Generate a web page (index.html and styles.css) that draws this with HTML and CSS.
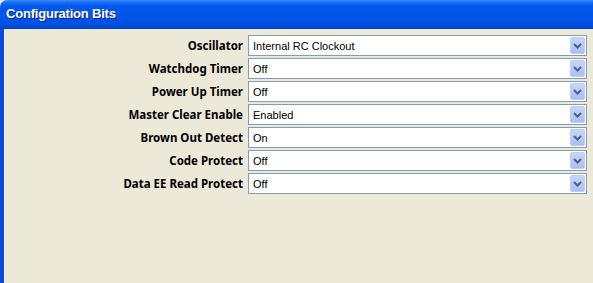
FILE: index.html
```html
<!DOCTYPE html>
<html lang="en">
<head>
    <meta charset="UTF-8">
    <title>Configuration Bits</title>
    <link rel="stylesheet" href="styles.css">
</head>
<body>

<div class="window">
    <div class="titlebar">Configuration Bits</div>
    <div class="content">
        <div class="form">
            <div class="label">Oscillator</div>
            <div class="combo"><span class="value">Internal RC Clockout</span><span class="btn"><svg width="9" height="6" viewBox="0 0 9 6"><path d="M1 1 L4.5 4.5 L8 1" fill="none" stroke="#4d6185" stroke-width="2"/></svg></span></div>

            <div class="label">Watchdog Timer</div>
            <div class="combo"><span class="value">Off</span><span class="btn"><svg width="9" height="6" viewBox="0 0 9 6"><path d="M1 1 L4.5 4.5 L8 1" fill="none" stroke="#4d6185" stroke-width="2"/></svg></span></div>

            <div class="label">Power Up Timer</div>
            <div class="combo"><span class="value">Off</span><span class="btn"><svg width="9" height="6" viewBox="0 0 9 6"><path d="M1 1 L4.5 4.5 L8 1" fill="none" stroke="#4d6185" stroke-width="2"/></svg></span></div>

            <div class="label">Master Clear Enable</div>
            <div class="combo"><span class="value">Enabled</span><span class="btn"><svg width="9" height="6" viewBox="0 0 9 6"><path d="M1 1 L4.5 4.5 L8 1" fill="none" stroke="#4d6185" stroke-width="2"/></svg></span></div>

            <div class="label">Brown Out Detect</div>
            <div class="combo"><span class="value">On</span><span class="btn"><svg width="9" height="6" viewBox="0 0 9 6"><path d="M1 1 L4.5 4.5 L8 1" fill="none" stroke="#4d6185" stroke-width="2"/></svg></span></div>

            <div class="label">Code Protect</div>
            <div class="combo"><span class="value">Off</span><span class="btn"><svg width="9" height="6" viewBox="0 0 9 6"><path d="M1 1 L4.5 4.5 L8 1" fill="none" stroke="#4d6185" stroke-width="2"/></svg></span></div>

            <div class="label">Data EE Read Protect</div>
            <div class="combo"><span class="value">Off</span><span class="btn"><svg width="9" height="6" viewBox="0 0 9 6"><path d="M1 1 L4.5 4.5 L8 1" fill="none" stroke="#4d6185" stroke-width="2"/></svg></span></div>
        </div>
    </div>
</div>

</body>
</html>
```

FILE: styles.css
```css
body {
    margin: 0;
    font-family: 'Liberation Sans', Arial, sans-serif;
    font-size: 11px;
    background: #ece9d8;
    overflow: hidden;
}

.window {
    width: 593px;
    height: 283px;
    display: flex;
    flex-direction: column;
}

.titlebar {
    height: 29px;
    box-sizing: border-box;
    padding: 6px 0 0 6px;
    color: #fff;
    font-size: 13px;
    font-weight: bold;
    letter-spacing: -0.2px;
    text-shadow: 1px 1px 0 #0a1e8c;
    border-radius: 7px 0 0 0;
    background: linear-gradient(to bottom, #3b8cf8 0%, #1a6ff5 8%, #0058ee 20%, #0055e8 60%, #0050e0 85%, #0044c8 100%);
}

.content {
    flex: 1;
    border-left: 4px solid #0b4ae0;
    box-shadow: inset 1px 0 0 #f4f2e8;
}

.form {
    display: grid;
    grid-template-columns: 1fr 339px;
    grid-auto-rows: 21px;
    column-gap: 5px;
    row-gap: 2px;
    padding: 6px 6px 0 0;
}

.label {
    font-family: 'Noto Sans', 'Liberation Sans', sans-serif;
    font-size: 11.5px;
    font-weight: bold;
    text-align: right;
    line-height: 21px;
    color: #000;
}

.combo {
    display: flex;
    align-items: center;
    background: #fff;
    border: 1px solid #7f9db9;
    padding: 0 1px 0 4px;
}

.value {
    flex: 1;
    color: #000;
}

.btn {
    width: 15px;
    height: 17px;
    box-sizing: border-box;
    display: flex;
    align-items: center;
    justify-content: center;
    border: 1px solid #bccdf7;
    border-radius: 2px;
    background: linear-gradient(to bottom, #c6d6fc 0%, #b8cbf8 50%, #a9bef3 100%);
}
```
